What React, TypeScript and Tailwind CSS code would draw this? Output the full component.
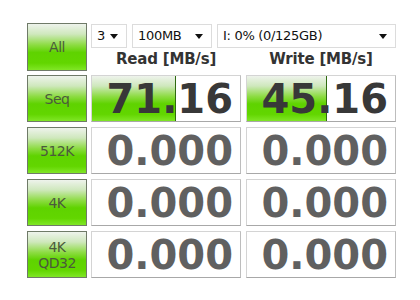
import React from "react";

const btnBg =
  "bg-[linear-gradient(to_bottom,#eef3ec_0%,#cfe8bd_22%,#8edc45_45%,#5fd300_62%,#62d600_85%,#80e626_100%)]";

function Btn({ children }: { children: React.ReactNode }) {
  return (
    <div
      className={`w-[60px] h-full flex flex-col items-center justify-center border border-[#6f7a68] ${btnBg} text-[14px] leading-[16px] text-[#4b5a3c] [font-family:'DejaVu_Sans',sans-serif] tracking-[-0.5px]`}
    >
      {children}
    </div>
  );
}

function Cell({ value, pct, dark }: { value: string; pct?: number; dark?: boolean }) {
  return (
    <div className="relative w-[150px] h-full bg-white border border-[#d4d4d4] border-b-[#a8a8a8] border-r-[#bdbdbd] overflow-hidden">
      {pct ? (
        <div
          className={`absolute left-0 top-0 bottom-0 ${btnBg} border-r border-[#2f6a10]`}
          style={{ width: `${pct}%` }}
        />
      ) : null}
      <div
        className={`relative h-full flex items-center justify-end pr-[7px] text-[40px] font-bold leading-none [font-family:'DejaVu_Sans',sans-serif] tracking-[0px] ${
          dark ? "text-[#383838]" : "text-[#606060]"
        }`}
      >
        {value}
      </div>
    </div>
  );
}

function Select({ w, label }: { w: string; label: string }) {
  return (
    <div
      className={`${w} h-[24px] flex items-center justify-between bg-white border border-[#dcdcdc] pl-[5px] pr-[8px] text-[13px] text-[#111] [font-family:'DejaVu_Sans',sans-serif] tracking-[-0.3px]`}
    >
      <span>{label}</span>
      <svg width="8" height="5" viewBox="0 0 8 5">
        <path d="M0 0 H8 L4 5 Z" fill="#111" />
      </svg>
    </div>
  );
}

export default function App() {
  const rows: { label: React.ReactNode; r: string; w: string; rp?: number; wp?: number; dark?: boolean }[] = [
    { label: "Seq", r: "71.16", w: "45.16", rp: 57, wp: 54, dark: true },
    { label: "512K", r: "0.000", w: "0.000" },
    { label: "4K", r: "0.000", w: "0.000" },
    {
      label: (
        <>
          <span>4K</span>
          <span>QD32</span>
        </>
      ),
      r: "0.000",
      w: "0.000",
    },
  ];
  return (
    <div className="w-[420px] h-[300px] bg-white pl-[27px] pt-[23px]">
      <div className="flex h-[48px]">
        <Btn>All</Btn>
        <div className="ml-[4px] flex flex-col">
          <div className="flex gap-[5px] pt-[1px]">
            <Select w="w-[36px]" label="3" />
            <Select w="w-[80px]" label="100MB" />
            <Select w="w-[179px]" label="I: 0% (0/125GB)" />
          </div>
          <div className="flex gap-[5px] h-[23px] items-center text-[15px] font-bold text-[#333] [font-family:'DejaVu_Sans',sans-serif] tracking-[-0.2px]">
            <div className="w-[150px] text-center">Read [MB/s]</div>
            <div className="w-[150px] text-center">Write [MB/s]</div>
          </div>
        </div>
      </div>
      <div className="mt-[4px] flex flex-col gap-[5px]">
        {rows.map((row, i) => (
          <div key={i} className="flex h-[47px]">
            <Btn>{row.label}</Btn>
            <div className="ml-[4px]">
              <Cell value={row.r} pct={row.rp} dark={row.dark} />
            </div>
            <div className="ml-[5px]">
              <Cell value={row.w} pct={row.wp} dark={row.dark} />
            </div>
          </div>
        ))}
      </div>
    </div>
  );
}
